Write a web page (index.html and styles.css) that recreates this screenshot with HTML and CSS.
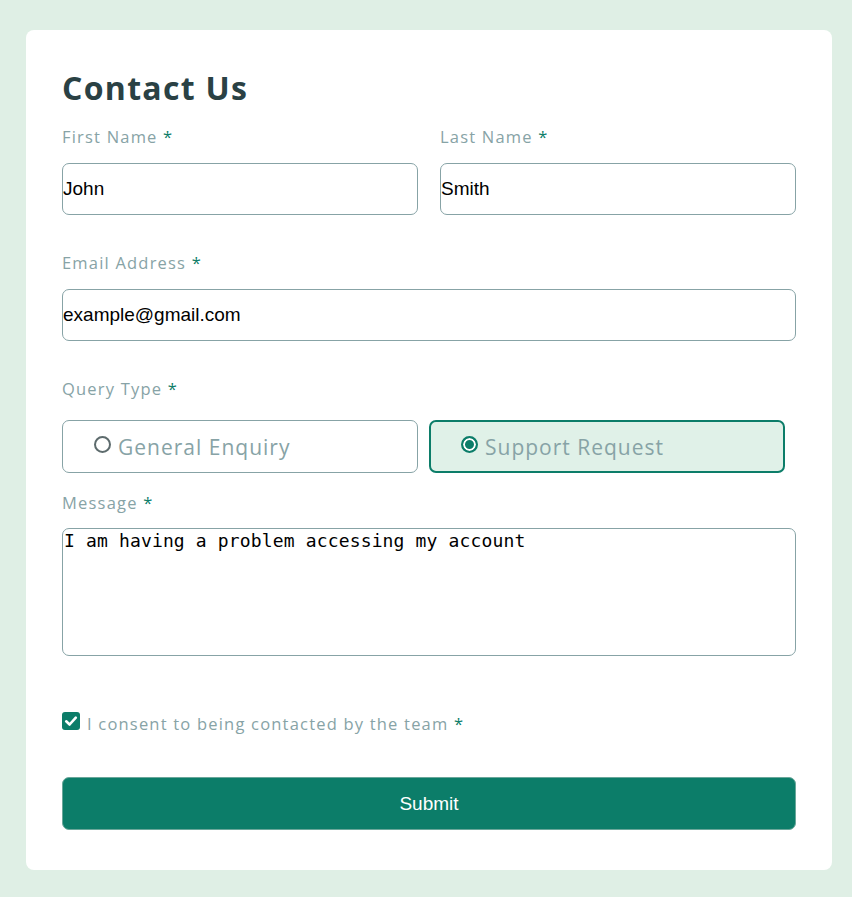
FILE: index.html
```html
<!DOCTYPE html>
<html lang="en">
<head>
<meta charset="utf-8">
<title>Contact Us</title>
<link rel="stylesheet" href="styles.css">
</head>
<body>
<main class="card">
  <h1 class="title">Contact Us</h1>
  <div class="row two">
    <div class="field">
      <label class="label">First Name <span class="req">*</span></label>
      <div class="input">John</div>
    </div>
    <div class="field">
      <label class="label">Last Name <span class="req">*</span></label>
      <div class="input">Smith</div>
    </div>
  </div>
  <div class="field">
    <label class="label">Email Address <span class="req">*</span></label>
    <div class="input">example@gmail.com</div>
  </div>
  <div class="field query">
    <label class="label">Query Type <span class="req">*</span></label>
    <div class="radios">
      <div class="radio"><span class="dot"></span><span class="rtext">General Enquiry</span></div>
      <div class="radio selected"><span class="dot"></span><span class="rtext">Support Request</span></div>
    </div>
  </div>
  <div class="field msg">
    <label class="label">Message <span class="req">*</span></label>
    <div class="textarea">I am having a problem accessing my account</div>
  </div>
  <div class="consent">
    <span class="check"><svg viewBox="0 0 18 18" width="18" height="18"><path d="M4.2 9.3 L7.6 12.5 L13.8 5.6" fill="none" stroke="#fff" stroke-width="2.6" stroke-linecap="round" stroke-linejoin="round"/></svg></span>
    <span class="ctext">I consent to being contacted by the team <span class="req">*</span></span>
  </div>
  <button class="submit">Submit</button>
</main>
</body>
</html>
```

FILE: styles.css
```css
html, body {
  margin: 0;
  padding: 0;
}
body {
  background: #dfefe5;
  font-family: "Open Sans", "Noto Sans", sans-serif;
  padding: 30px 20px 27px 26px;
}
.card {
  width: 734px;
  background: #fff;
  border-radius: 8px;
  padding: 38px 36px 40px 36px;
}
.title {
  margin: 0;
  font-size: 32px;
  font-weight: 700;
  color: #2a4144;
  line-height: 40px;
  letter-spacing: 1.3px;
}
.label {
  display: block;
  font-size: 16.5px;
  color: #87a3a6;
  line-height: 20px;
  letter-spacing: 1.2px;
}
.req {
  color: #0c7d69;
}
.row.two {
  display: grid;
  grid-template-columns: 356px 356px;
  column-gap: 22px;
  margin-top: 19px;
}
.field .input {
  margin-top: 16px;
}
.input {
  box-sizing: border-box;
  height: 52px;
  border: 1px solid #87a3a6;
  border-radius: 7px;
  font-family: "Liberation Sans", Arial, sans-serif;
  font-size: 19px;
  color: #000;
  display: flex;
  align-items: center;
  padding-left: 0;
}
.row.two + .field {
  margin-top: 38px;
}
.query {
  margin-top: 38px;
}
.radios {
  display: flex;
  gap: 11px;
  margin-top: 21px;
}
.radio {
  box-sizing: border-box;
  width: 356px;
  height: 53px;
  border: 1px solid #87a3a6;
  border-radius: 7px;
  display: flex;
  align-items: center;
  padding-left: 31px;
  gap: 7px;
}
.radio.selected {
  border: 2px solid #0c7d69;
  background: #e0f1e8;
  padding-left: 30px;
}
.dot {
  box-sizing: border-box;
  width: 17px;
  height: 17px;
  border-radius: 50%;
  border: 2px solid #5d6b6d;
  background: #fff;
  margin-top: -4px;
}
.selected .dot {
  border-color: #0c7d69;
  background: #0c7d69;
  box-shadow: inset 0 0 0 2px #fff;
}
.rtext {
  font-size: 21px;
  color: #87a3a6;
  letter-spacing: 1px;
  line-height: 26px;
}
.msg {
  margin-top: 20px;
}
.textarea {
  box-sizing: border-box;
  margin-top: 15px;
  height: 128px;
  border: 1px solid #87a3a6;
  border-radius: 7px;
  font-family: "DejaVu Sans Mono", monospace;
  font-size: 18px;
  line-height: 22px;
  color: #000;
  padding: 1px 0 0 1px;
  letter-spacing: 0.15px;
}
.consent {
  display: flex;
  align-items: center;
  gap: 7px;
  margin-top: 57px;
}
.check {
  width: 18px;
  height: 18px;
  border-radius: 3px;
  background: #0c7d69;
  display: block;
  margin-top: -6px;
}
.check svg {
  display: block;
}
.ctext {
  font-size: 16.5px;
  color: #87a3a6;
  letter-spacing: 1.2px;
  line-height: 22px;
}
.submit {
  display: block;
  box-sizing: border-box;
  width: 734px;
  height: 53px;
  margin-top: 42px;
  background: #0c7d69;
  border: 1px solid #6aa79a;
  border-radius: 7px;
  color: #fff;
  font-family: "Liberation Sans", Arial, sans-serif;
  font-size: 19px;
}
```
